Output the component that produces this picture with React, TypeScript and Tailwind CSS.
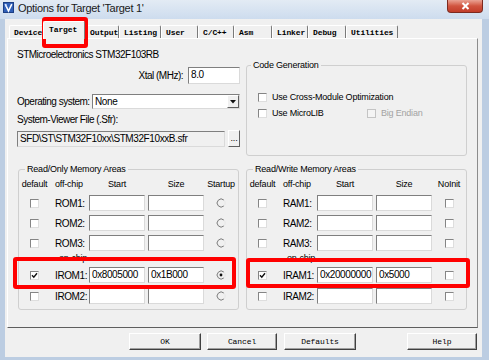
import React from 'react';

const ui = "font-['Liberation_Sans',Arial,sans-serif] text-[9px] tracking-[-0.2px] text-black";
const mono = "font-['Liberation_Mono','Courier_New',monospace] text-[8px] tracking-[-0.1px]";

type Tab = { name: string; w: string; active?: boolean };

const tabs: Tab[] = [
  { name: 'Device', w: 'w-[34px]' },
  { name: 'Target', w: 'w-[42px]', active: true },
  { name: 'Output', w: 'w-[34px]' },
  { name: 'Listing', w: 'w-[42px]' },
  { name: 'User', w: 'w-[37px]' },
  { name: 'C/C++', w: 'w-[36px]' },
  { name: 'Asm', w: 'w-[38px]' },
  { name: 'Linker', w: 'w-[36px]' },
  { name: 'Debug', w: 'w-[38px]' },
  { name: 'Utilities', w: 'w-[52px]' },
];

const Check = ({ checked = false, disabled = false }: { checked?: boolean; disabled?: boolean }) => (
  <span
    className={`block w-[9px] h-[9px] border ${
      disabled
        ? 'border-[#c4c4c4] bg-[#f4f4f4]'
        : 'border-t-[#858585] border-l-[#858585] border-r-[#dedede] border-b-[#dedede] bg-white'
    }`}
  >
    {checked && (
      <svg width="7" height="7" viewBox="0 0 7 7">
        <path d="M1 3.2 L2.8 5.2 L6 1.2" stroke="#111" strokeWidth="1.4" fill="none" />
      </svg>
    )}
  </span>
);

const Radio = ({ on = false }: { on?: boolean }) => (
  <svg width="10" height="10" viewBox="0 0 10 10">
    <path d="M7.9 2.1 A4 4 0 1 0 7.9 7.9" stroke="#7a7a7a" strokeWidth="1" fill="none" />
    <path d="M7.9 2.1 A4 4 0 0 1 7.9 7.9" stroke="#e6e6e6" strokeWidth="1" fill="none" />
    {on && <circle cx="5" cy="5" r="1.4" fill="#111" />}
  </svg>
);

const Field = ({ value = '', className = '', gray = false }: { value?: string; className?: string; gray?: boolean }) => (
  <div
    className={`h-[16px] border border-t-[#7f7f7f] border-l-[#7f7f7f] border-r-[#dadada] border-b-[#dadada] px-[2px] text-[10px] leading-[14px] tracking-[-0.4px] whitespace-nowrap overflow-hidden ${
      gray ? 'bg-[#f0f0f0]' : 'bg-white'
    } ${className}`}
  >
    {value}
  </div>
);

type Row = { checked?: boolean; label: string; start?: string; size?: string; on?: boolean };

const MemRow = ({ row, last }: { row: Row; last: 'radio' | 'check' }) => (
  <div className="flex items-center h-[16px]">
    <div className="w-[31px] flex justify-center">
      <Check checked={row.checked} />
    </div>
    <div className="w-[39px] pl-[5px] text-[10px] tracking-[-0.4px]">{row.label}</div>
    <Field value={row.start} className="w-[56px]" />
    <Field value={row.size} className="w-[56px] ml-[3px]" />
    <div className="flex-1 flex justify-center">{last === 'radio' ? <Radio on={row.on} /> : <Check />}</div>
  </div>
);

const MemBox = ({
  title,
  lastHead,
  prefix,
  rows,
  chip,
  last,
  className,
}: {
  title: string;
  lastHead: string;
  prefix: string;
  rows: Row[];
  chip: Row[];
  last: 'radio' | 'check';
  className: string;
}) => (
  <fieldset className={`w-[221px] h-[146px] border border-[#cfcfcf] rounded-[3px] ${className}`}>
    <legend className="ml-[6px] px-[2px] leading-[10px]">{title}</legend>
    <div className="flex mt-[5px] leading-[10px]">
      <div className="w-[31px] text-center">default</div>
      <div className="w-[39px] pl-[5px]">off-chip</div>
      <div className="w-[56px] text-center">Start</div>
      <div className="w-[56px] ml-[3px] text-center">Size</div>
      <div className="flex-1 text-center">{lastHead}</div>
    </div>
    <div className="flex flex-col gap-[4px] mt-[6px]">
      {rows.map((r) => (
        <MemRow key={r.label} row={r} last={last} />
      ))}
    </div>
    <div className="mt-[2px] h-[10px] leading-[10px] pl-[40px]">on-chip</div>
    <div className="flex flex-col gap-[5px] mt-[4px]">
      {chip.map((r) => (
        <MemRow key={r.label} row={r} last={last} />
      ))}
    </div>
    <span className="hidden">{prefix}</span>
  </fieldset>
);

const Button = ({ label, className }: { label: string; className: string }) => (
  <div
    className={`h-[17px] border border-t-white border-l-white border-r-[#404040] border-b-[#404040] shadow-[inset_-1px_-1px_0_#a0a0a0] bg-[#f0f0f0] flex items-center justify-center ${mono} ${className}`}
  >
    {label}
  </div>
);

export default function App() {
  return (
    <div className={`relative w-[489px] h-[360px] overflow-hidden bg-[#bccde2] ${ui}`}>
      {/* title bar */}
      <div className="h-[19px] flex items-start bg-gradient-to-b from-[#e3ebf4] to-[#cddcee]">
        <svg className="ml-[3px] mt-[2px]" width="11" height="11" viewBox="0 0 11 11">
          <rect x="0.5" y="0.5" width="10" height="10" fill="#2f5fb8" stroke="#1c3f85" />
          <path d="M2.2 2.2 L5.5 9 L8.8 2.2" stroke="white" strokeWidth="1.6" fill="none" />
          <path d="M3 2 L3 5" stroke="#bcd3ff" strokeWidth="1" />
        </svg>
        <div className="ml-[4px] mt-[2px] text-[11px] leading-[13px] tracking-[-0.3px] text-[#1a1a1a]">
          Options for Target 'Target 1'
        </div>
        <div className="ml-auto mr-[6px] w-[36px] h-[13px] rounded-b-[4px] border border-t-0 border-[#7d2a1f] bg-gradient-to-b from-[#e9a293] via-[#d1543f] to-[#c23d2a] flex items-center justify-center">
          <svg width="9" height="8" viewBox="0 0 9 8">
            <path d="M1.5 1 L7.5 7 M7.5 1 L1.5 7" stroke="white" strokeWidth="2" />
          </svg>
        </div>
      </div>

      {/* client area */}
      <div className="ml-[5px] w-[477px] h-[338px] bg-[#f0f0f0] flex flex-col">
        <div className="h-[19px] flex items-end pl-[4px]">
          {tabs.map((t) =>
            t.active ? (
              <div
                key={t.name}
                className={`${t.w} h-[18px] -mb-px relative z-10 bg-[#f0f0f0] border border-b-0 border-t-white border-l-white border-r-[#808080] rounded-t-[2px] pl-[5px] pt-[3px] leading-[10px] font-bold ${mono}`}
              >
                {t.name}
              </div>
            ) : (
              <div
                key={t.name}
                className={`${t.w} h-[13px] border border-b-0 border-t-white border-l-white border-r-[#7a7a7a] rounded-t-[2px] pl-[4px] pt-[2px] leading-[10px] font-bold ${mono}`}
              >
                {t.name}
              </div>
            )
          )}
        </div>

        {/* tab page */}
        <div className="ml-[2px] w-[471px] h-[290px] border border-t-white border-l-white border-r-[#8c8c8c] border-b-[#5e5e5e] px-[9px]">
          <div className="mt-[10px] leading-[11px] text-[10px] tracking-[-0.5px]">STMicroelectronics STM32F103RB</div>

          <div className="flex">
            <div className="w-[223px] flex flex-col">
              <div className="mt-[7px] flex items-center justify-end">
                <span className="mr-[5px] text-[10px] tracking-[-0.5px]">Xtal (MHz):</span>
                <Field value="8.0" className="w-[52px] h-[17px]" />
              </div>
              <div className="mt-[10px] flex items-center">
                <span className="w-[75px] text-[10px] tracking-[-0.5px]">Operating system:</span>
                <div className="w-[148px] h-[15px] border border-t-[#7f7f7f] border-l-[#7f7f7f] border-r-[#dadada] border-b-[#dadada] bg-white flex items-center">
                  <span className="pl-[2px] flex-1 text-[10px] tracking-[-0.4px] leading-[12px]">None</span>
                  <span className="w-[12px] h-[13px] bg-[#f0f0f0] border border-t-white border-l-white border-r-[#606060] border-b-[#606060] flex items-center justify-center">
                    <svg width="6" height="4" viewBox="0 0 6 4">
                      <path d="M0 0 L6 0 L3 3.5 Z" fill="#111" />
                    </svg>
                  </span>
                </div>
              </div>
              <div className="mt-[6px] leading-[10px] text-[10px] tracking-[-0.5px]">System-Viewer File (.Sfr):</div>
              <div className="mt-[5px] flex items-center">
                <Field value="SFD\ST\STM32F10xx\STM32F10xxB.sfr" gray className="w-[208px]" />
                <div className="ml-[3px] w-[12px] h-[17px] bg-[#f0f0f0] border border-t-white border-l-white border-r-[#606060] border-b-[#606060] text-[9px] leading-[14px] text-center">
                  ...
                </div>
              </div>
            </div>

            <fieldset className="ml-[6px] w-[221px] h-[96px] border border-[#cfcfcf] rounded-[3px]">
              <legend className="ml-[4px] px-[2px] leading-[10px]">Code Generation</legend>
              <div className="mt-[22px] pl-[11px] h-[11px] flex items-center">
                <Check />
                <span className="ml-[5px]">Use Cross-Module Optimization</span>
              </div>
              <div className="mt-[5px] pl-[11px] h-[11px] flex items-center">
                <div className="w-[109px] flex items-center">
                  <Check />
                  <span className="ml-[5px]">Use MicroLIB</span>
                </div>
                <Check disabled />
                <span className="ml-[5px] text-[#a3a3a3]">Big Endian</span>
              </div>
            </fieldset>
          </div>

          <div className="flex mt-[8px]">
            <MemBox
              className="ml-[1px]"
              title="Read/Only Memory Areas"
              lastHead="Startup"
              prefix="ROM"
              last="radio"
              rows={[{ label: 'ROM1:' }, { label: 'ROM2:' }, { label: 'ROM3:' }]}
              chip={[
                { label: 'IROM1:', checked: true, start: '0x8005000', size: '0x1B000', on: true },
                { label: 'IROM2:' },
              ]}
            />
            <MemBox
              className="ml-[7px]"
              title="Read/Write Memory Areas"
              lastHead="NoInit"
              prefix="RAM"
              last="check"
              rows={[{ label: 'RAM1:' }, { label: 'RAM2:' }, { label: 'RAM3:' }]}
              chip={[
                { label: 'IRAM1:', checked: true, start: '0x20000000', size: '0x5000' },
                { label: 'IRAM2:' },
              ]}
            />
          </div>
        </div>

        <div className="mt-[5px] flex">
          <Button label="OK" className="ml-[124px] w-[72px]" />
          <Button label="Cancel" className="ml-[6px] w-[70px]" />
          <Button label="Defaults" className="ml-[7px] w-[72px]" />
          <Button label="Help" className="ml-[51px] w-[70px]" />
        </div>
      </div>

      {/* red highlight marks */}
      <div className="absolute left-[42px] top-[17px] w-[46px] h-[31px] border-4 border-[#ff0000] rounded-[3px]" />
      <div className="absolute left-[13px] top-[257px] w-[223px] h-[32px] border-4 border-[#ff0000] rounded-[3px]" />
      <div className="absolute left-[246px] top-[258px] w-[224px] h-[30px] border-4 border-[#ff0000] rounded-[3px]" />
    </div>
  );
}
